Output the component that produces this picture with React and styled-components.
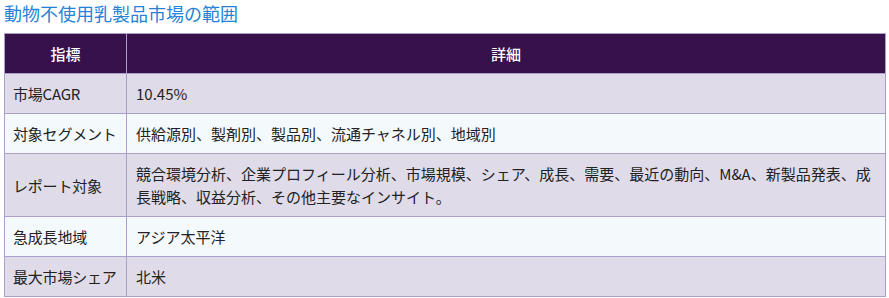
import React from 'react'
import styled, { createGlobalStyle } from 'styled-components';

const GlobalStyle = createGlobalStyle`
    body{
        margin: 0;
        background: #ffffff;
        font-family: "Noto Sans CJK JP", "Noto Sans", sans-serif;
    }
`;

const rows = [
    ['市場CAGR', '10.45%'],
    ['対象セグメント', '供給源別、製剤別、製品別、流通チャネル別、地域別'],
    ['レポート対象', '競合環境分析、企業プロフィール分析、市場規模、シェア、成長、需要、最近の動向、M&A、新製品発表、成長戦略、収益分析、その他主要なインサイト。'],
    ['急成長地域', 'アジア太平洋'],
    ['最大市場シェア', '北米'],
];

function App() {
    return (
        <>
            <GlobalStyle />
            <ScopeStyled>
                <h2>動物不使用乳製品市場の範囲</h2>
                <table>
                    <colgroup>
                        <col className="label-col" />
                        <col />
                    </colgroup>
                    <thead>
                        <tr>
                            <th>指標</th>
                            <th>詳細</th>
                        </tr>
                    </thead>
                    <tbody>
                        {rows.map(([k, v], i) => (
                            <Row key={k} $odd={i % 2 === 0}>
                                <td className="label">{k}</td>
                                <td>{v}</td>
                            </Row>
                        ))}
                    </tbody>
                </table>
            </ScopeStyled>
        </>
    )
}

const Row = styled.tr`
    background: ${p => p.$odd ? '#dfdbe9' : '#f4f9fc'};
`;

const ScopeStyled = styled.div`
    padding: 0 4px;
    h2{
        margin: 0 0 6px;
        font-size: 18px;
        line-height: 27px;
        font-weight: 400;
        color: #2483d6;
    }
    table{
        width: 882px;
        table-layout: fixed;
        border-collapse: collapse;
        font-size: 15px;
        line-height: 23px;
        color: #222222;
    }
    .label-col{
        width: 122px;
    }
    th, td{
        border: 1px solid #ab9fcb;
        padding: 8px 9px;
        text-align: left;
        vertical-align: middle;
    }
    th{
        background: #37114a;
        color: #ffffff;
        text-align: center;
        font-weight: 500;
        padding: 8px 9px;
    }
    .label{
        white-space: nowrap;
        padding: 8px 4px 8px 8px;
        letter-spacing: -0.2px;
    }
`;

export default App;
